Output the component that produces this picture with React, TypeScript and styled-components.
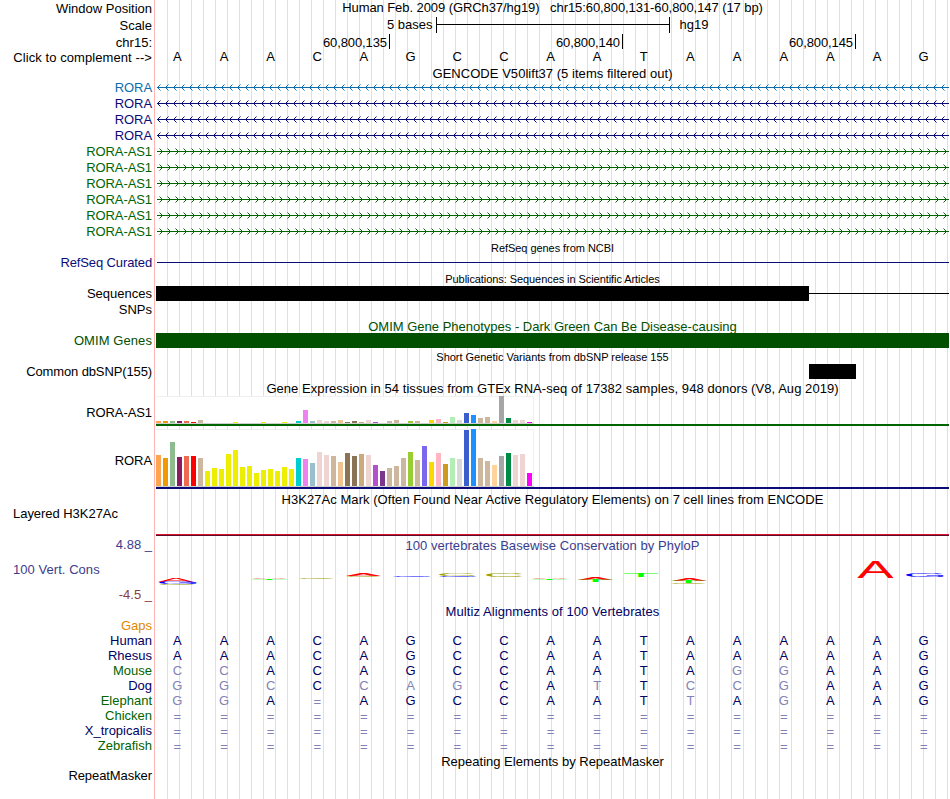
import React from "react";
import styled, { createGlobalStyle } from "styled-components";

const BLACK = "#000000";
const NAVY = "#000064";
const GENE_BLUE = "#0c0c78";
const GENE_LIGHT = "#0c6cae";
const GREEN = "#006400";
const WIGGLE_BLUE = "#3c3c8c";
const TRACK_WIDTH = 793;

const GlobalStyle = createGlobalStyle`
    body {
        margin: 0;
        background: #ffffff;
    }
`;

const Browser = styled.main`
    width: 949px;
    height: 799px;
    overflow: hidden;
    font-family: "Liberation Sans", Arial, sans-serif;
    font-size: 13px;
    line-height: 15px;
    white-space: pre;
    background: linear-gradient(#ffb4b4, #ffb4b4) 154px 0 / 1px 100% no-repeat,
        repeating-linear-gradient(
                to right,
                transparent 0 11px,
                #dcdcff 11px 12px
            )
            156px 0 / 793px 100% no-repeat;
`;

const Row = styled.div<{ $height: number }>`
    display: grid;
    grid-template-columns: 152px 793px;
    column-gap: 4px;
    height: ${({ $height }) => $height}px;
`;

const Label = styled.div<{
    $color?: string;
    $drop?: number;
    $left?: boolean;
    $spacing?: number;
}>`
    padding-top: ${({ $drop = 0 }) => $drop}px;
    padding-left: 13px;
    text-align: ${({ $left }) => ($left ? "left" : "right")};
    letter-spacing: ${({ $spacing = 0 }) => $spacing}px;
    color: ${({ $color = BLACK }) => $color};
`;

const Title = styled.div<{
    $color?: string;
    $drop?: number;
    $small?: boolean;
    $spacing?: number;
}>`
    padding-top: ${({ $drop = 0, $small }) => ($small ? 1 : $drop)}px;
    text-align: center;
    font-size: ${({ $small }) => ($small ? 11 : 13)}px;
    letter-spacing: ${({ $spacing = 0 }) => $spacing}px;
    color: ${({ $color = BLACK }) => $color};
`;

const ScaleTrack = styled.div`
    display: flex;
    padding-left: 231px;
`;

const ScaleBar = styled.div`
    display: flex;
    align-items: center;
    width: 232px;
    height: 16px;
    margin: 0 10px 0 3px;
    border: solid ${BLACK};
    border-width: 0 1px;

    &::before {
        content: "";
        width: 100%;
        height: 1px;
        margin-top: -1px;
        background: ${BLACK};
    }
`;

const Ruler = styled.div`
    display: grid;
    grid-template-columns: 234px 233px 233px;
`;

const RulerTick = styled.div`
    box-sizing: border-box;
    height: 15px;
    padding: 1px 2px 0 0;
    border-right: 1px solid ${BLACK};
    text-align: right;
    letter-spacing: -0.1px;
`;

const Bases = styled.div`
    display: grid;
    grid-template-columns: repeat(17, 1fr);
    margin-left: -2px;
    margin-right: 2px;
    text-align: center;
`;

const Base = styled.span<{ $color: string; $drop?: number }>`
    padding-top: ${({ $drop = 0 }) => $drop}px;
    color: ${({ $color }) => $color};
`;

const Drawing = styled.svg`
    display: block;
`;

const Block = styled.div<{ $start?: number; $width: number; $color: string }>`
    width: ${({ $width }) => $width}px;
    height: 15px;
    margin-left: ${({ $start = 0 }) => $start}px;
    background: ${({ $color }) => $color};
`;

const Blocks = styled.div`
    display: flex;
    align-items: center;
    height: 15px;
`;

const ThinLine = styled.div<{ $color: string }>`
    flex: 1;
    height: 1px;
    margin-left: ${({ $color }) => ($color === BLACK ? 0 : 1)}px;
    background: ${({ $color }) => $color};
`;

const Expression = styled.div<{ $color: string }>`
    align-self: start;
    border-bottom: 2px solid ${({ $color }) => $color};
`;

const ExpressionPlot = styled.div<{ $height: number }>`
    display: flex;
    align-items: flex-end;
    gap: 2px;
    box-sizing: border-box;
    width: 378px;
    height: ${({ $height }) => $height}px;
    background: #ffffff;
    box-shadow: inset -1px 1px #f0f0f0;
    border-bottom: 1px solid #d0d0d0;
`;

const Tissue = styled.i`
    width: 5px;
`;

const Signal = styled.div`
    align-self: start;
    height: 2px;
    background: linear-gradient(#d8142c 50%, #5c0c28 50%);
`;

const WiggleLabels = styled.div`
    padding-top: 9px;
`;

const GENES = [
    { name: "RORA", color: GENE_LIGHT },
    { name: "RORA", color: GENE_BLUE },
    { name: "RORA", color: GENE_BLUE },
    { name: "RORA", color: GENE_BLUE },
    ...Array.from({ length: 6 }, () => ({ name: "RORA-AS1", color: GREEN })),
];

const TISSUE_COLORS = [
    "#ffa54f", "#ee9a00", "#8fbc8f", "#8b1c62", "#ee6a50", "#ff0000", "#cdb79e",
    ...Array<string>(13).fill("#eeee00"),
    "#00cdcd", "#ee82ee", "#9ac0cd", "#eed5d2", "#eed5d2", "#cdb79e", "#eec591",
    "#8b7355", "#8b7355", "#cdaa7d", "#eed5d2", "#b452cd", "#7a378b", "#cdb79e",
    "#cdb79e", "#cdb79e", "#9acd32", "#cdb79e", "#7a67ee", "#ffd700", "#ffb6c1",
    "#cd9b1d", "#b4eeb4", "#d9d9d9", "#3a5fcd", "#1e90ff", "#cdb79e", "#cdb79e",
    "#ffd39b", "#a6a6a6", "#008b45", "#eed5d2", "#eed5d2", "#ff00ff",
];

const RORA_AS1_LEVELS = [
    2, 2, 2, 2, 2, 1, 3, 0, 0, 0, 0, 1, 0, 0, 0, 1, 0, 0, 1, 0, 2, 13, 2, 3, 2, 2,
    3, 1, 2, 1, 3, 1, 0, 2, 3, 0, 2, 2, 0, 3, 4, 1, 6, 3, 10, 8, 5, 6, 2, 27, 5,
    3, 3, 1,
];

const RORA_LEVELS = [
    31, 28, 44, 29, 30, 30, 28, 15, 18, 17, 32, 36, 19, 20, 13, 16, 17, 15, 19,
    17, 28, 27, 23, 34, 31, 30, 24, 33, 30, 32, 31, 21, 15, 18, 20, 28, 34, 26,
    40, 24, 33, 22, 28, 27, 56, 57, 28, 25, 21, 30, 33, 31, 32, 13,
];

const SEQUENCE = "AAACAGCCAATAAAAAG";

// lower case marks a base that differs from the reference
const SPECIES = [
    { name: "Human", color: NAVY, bases: SEQUENCE },
    { name: "Rhesus", color: NAVY, bases: SEQUENCE },
    { name: "Mouse", color: GREEN, bases: "ccACAGCCAATAggAAG" },
    { name: "Dog", color: NAVY, bases: "ggcCcagCAtTccgAAG" },
    { name: "Elephant", color: GREEN, bases: "ggA=AGCCAATtAgAAG" },
    { name: "Chicken", color: GREEN, bases: "=================" },
    { name: "X_tropicalis", color: NAVY, bases: "=================" },
    { name: "Zebrafish", color: GREEN, bases: "=================" },
];

const LOGO_COLORS: Record<string, string> = {
    A: "#ff0000",
    C: "#a0a000",
    G: "#0000ff",
    T: "#00ff00",
};

// ink box of each letter in a 100px font: left, width, height
const LOGO_INK: Record<string, [number, number, number]> = {
    A: [0.3, 66, 69],
    C: [5, 63, 71],
    G: [5, 67, 71],
    T: [2, 57, 69],
};

// letter, x, y, width, height
const LOGOS: [string, number, number, number, number][] = [
    ["A", 2, 25, 36, 4],
    ["G", 3, 29, 38, 2],
    ["C", 3, 31, 36, 1],
    ["A", 96, 25, 35, 1],
    ["T", 96, 26, 35, 1],
    ["C", 143, 25, 35, 1],
    ["A", 190, 21, 35, 2],
    ["C", 190, 23, 35, 1],
    ["G", 237, 23, 38, 1],
    ["C", 283, 21, 36, 2],
    ["G", 283, 23, 38, 1],
    ["C", 330, 20, 36, 4],
    ["A", 376, 25, 35, 1],
    ["T", 376, 26, 35, 1],
    ["A", 422, 25, 35, 2],
    ["T", 422, 27, 35, 2],
    ["T", 468, 20, 34, 4],
    ["A", 516, 25, 35, 3],
    ["T", 515, 28, 35, 2],
    ["C", 515, 30, 35, 1],
    ["A", 701.5, 8, 36, 17],
    ["G", 750, 20, 38, 4],
];

const baseColor = (base: string) =>
    base === "=" || base !== base.toUpperCase() ? "#8282b4" : NAVY;

const Strand = ({ color, reverse }: { color: string; reverse: boolean }) => (
    <Drawing width={TRACK_WIDTH} height={16} shapeRendering="crispEdges">
        <path d="M1 7.5H793" stroke={color} />
        {Array.from({ length: 99 }, (_, i) => (
            <path
                key={i}
                d={
                    reverse
                        ? `M${i * 8 + 1} 7h1v1h-1zm1-1h1v3h-1zm1-1h1v1h-1zm0 4h1v1h-1z`
                        : `M${i * 8 + 6} 7h1v1h-1zm-1-1h1v3h-1zm-1-1h1v1h-1zm0 4h1v1h-1z`
                }
                fill={color}
            />
        ))}
        {Array.from({ length: 99 }, (_, i) => (
            <path
                key={i}
                d={`M${i * 8 + (reverse ? 4 : 3)} 4h1v1h-1zm0 6h1v1h-1z`}
                fill={color}
                opacity={0.5}
            />
        ))}
    </Drawing>
);

const TissueBars = ({
    levels,
    height,
    color,
}: {
    levels: number[];
    height: number;
    color: string;
}) => (
    <Expression $color={color}>
        <ExpressionPlot $height={height}>
            {levels.map((level, i) => (
                <Tissue
                    key={i}
                    style={{ height: level, background: TISSUE_COLORS[i] }}
                />
            ))}
        </ExpressionPlot>
    </Expression>
);

const Conservation = () => (
    <Drawing width={TRACK_WIDTH} height={51}>
        {LOGOS.map(([letter, x, y, width, height], i) => {
            const [left, inkWidth, inkHeight] = LOGO_INK[letter];
            const sx = width / inkWidth;
            return (
                <text
                    key={i}
                    fontSize={100}
                    fill={LOGO_COLORS[letter]}
                    transform={`translate(${x - left * sx} ${y + height}) scale(${sx} ${height / inkHeight})`}
                >
                    {letter}
                </text>
            );
        })}
    </Drawing>
);

const App = () => (
    <>
        <GlobalStyle />
        <Browser>
            <Row $height={17}>
                <Label $drop={1}>Window Position</Label>
                <Title $spacing={-0.075}>
                    {"Human Feb. 2009 (GRCh37/hg19)   chr15:60,800,131-60,800,147 (17 bp)"}
                </Title>
            </Row>
            <Row $height={17}>
                <Label $drop={1}>Scale</Label>
                <ScaleTrack>
                    5 bases
                    <ScaleBar />
                    hg19
                </ScaleTrack>
            </Row>
            <Row $height={15}>
                <Label $drop={1}>chr15:</Label>
                <Ruler>
                    <RulerTick>60,800,135</RulerTick>
                    <RulerTick>60,800,140</RulerTick>
                    <RulerTick>60,800,145</RulerTick>
                </Ruler>
            </Row>
            <Row $height={17}>
                <Label $drop={1} $spacing={0.08}>
                    {"Click to complement -->"}
                </Label>
                <Bases>
                    {[...SEQUENCE].map((base, i) => (
                        <Base key={i} $color={BLACK}>
                            {base}
                        </Base>
                    ))}
                </Bases>
            </Row>
            <Row $height={14}>
                <Label />
                <Title $spacing={0.04}>
                    GENCODE V50lift37 (5 items filtered out)
                </Title>
            </Row>
            {GENES.map(({ name, color }, i) => (
                <Row key={i} $height={16}>
                    <Label $color={color} $spacing={-0.08}>
                        {name}
                    </Label>
                    <Strand color={color} reverse={name === "RORA"} />
                </Row>
            ))}
            <Row $height={15}>
                <Label />
                <Title $small $spacing={-0.05}>
                    RefSeq genes from NCBI
                </Title>
            </Row>
            <Row $height={16}>
                <Label $color={GENE_BLUE} $spacing={-0.12}>
                    RefSeq Curated
                </Label>
                <Blocks>
                    <ThinLine $color={GENE_BLUE} />
                </Blocks>
            </Row>
            <Row $height={15}>
                <Label />
                <Title $small $spacing={-0.07}>
                    Publications: Sequences in Scientific Articles
                </Title>
            </Row>
            <Row $height={16}>
                <Label>Sequences</Label>
                <Blocks>
                    <Block $width={653} $color={BLACK} />
                    <ThinLine $color={BLACK} />
                </Blocks>
            </Row>
            <Row $height={17}>
                <Label>SNPs</Label>
            </Row>
            <Row $height={14}>
                <Label />
                <Title $color="#005000">
                    OMIM Gene Phenotypes - Dark Green Can Be Disease-causing
                </Title>
            </Row>
            <Row $height={16}>
                <Label $color="#005000" $spacing={0.08}>
                    OMIM Genes
                </Label>
                <Block $width={TRACK_WIDTH} $color="#005000" />
            </Row>
            <Row $height={15}>
                <Label />
                <Title $small $spacing={-0.02}>
                    Short Genetic Variants from dbSNP release 155
                </Title>
            </Row>
            <Row $height={17}>
                <Label $spacing={-0.12}>Common dbSNP(155)</Label>
                <Block $start={653} $width={47} $color={BLACK} />
            </Row>
            <Row $height={15}>
                <Label />
                <Title $spacing={0.055}>
                    Gene Expression in 54 tissues from GTEx RNA-seq of 17382
                    {" samples, 948 donors (V8, Aug 2019)"}
                </Title>
            </Row>
            <Row $height={33}>
                <Label $drop={9} $spacing={-0.08}>
                    RORA-AS1
                </Label>
                <TissueBars levels={RORA_AS1_LEVELS} height={28} color={GREEN} />
            </Row>
            <Row $height={63}>
                <Label $drop={24} $spacing={-0.08}>
                    RORA
                </Label>
                <TissueBars levels={RORA_LEVELS} height={58} color={GENE_BLUE} />
            </Row>
            <Row $height={14}>
                <Label />
                <Title $spacing={0.05}>
                    H3K27Ac Mark (Often Found Near Active Regulatory Elements) on
                    {" 7 cell lines from ENCODE"}
                </Title>
            </Row>
            <Row $height={28}>
                <Label $left $spacing={-0.04}>
                    Layered H3K27Ac
                </Label>
            </Row>
            <Row $height={3}>
                <Label />
                <Signal />
            </Row>
            <Row $height={16}>
                <Label $color={WIGGLE_BLUE}>4.88 _</Label>
                <Title $color={WIGGLE_BLUE} $drop={1} $spacing={0.04}>
                    100 vertebrates Basewise Conservation by PhyloP
                </Title>
            </Row>
            <Row $height={51}>
                <WiggleLabels>
                    <Label $left $color={WIGGLE_BLUE} $spacing={0.05}>
                        100 Vert. Cons
                    </Label>
                    <Label $color="#8c3c3c" $drop={10}>
                        -4.5 _
                    </Label>
                </WiggleLabels>
                <Conservation />
            </Row>
            <Row $height={14}>
                <Label />
                <Title $color={NAVY} $spacing={0.08}>
                    Multiz Alignments of 100 Vertebrates
                </Title>
            </Row>
            <Row $height={15}>
                <Label $color="#e18700">Gaps</Label>
            </Row>
            {SPECIES.map(({ name, color, bases }) => (
                <Row key={name} $height={15}>
                    <Label $color={color}>{name}</Label>
                    <Bases>
                        {[...bases].map((base, i) => (
                            <Base
                                key={i}
                                $color={baseColor(base)}
                                $drop={base === "=" ? 1 : 0}
                            >
                                {base.toUpperCase()}
                            </Base>
                        ))}
                    </Bases>
                </Row>
            ))}
            <Row $height={15}>
                <Label />
                <Title $drop={1}>Repeating Elements by RepeatMasker</Title>
            </Row>
            <Row $height={31}>
                <Label $spacing={-0.08}>RepeatMasker</Label>
            </Row>
        </Browser>
    </>
);

export default App;
